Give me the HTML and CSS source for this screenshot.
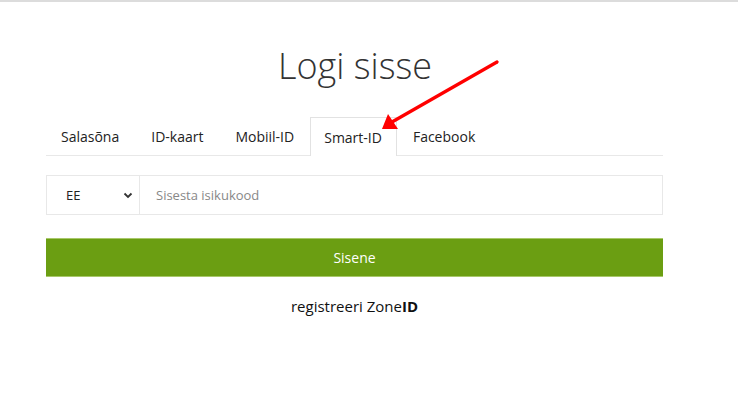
FILE: index.html
```html
<!DOCTYPE html>
<html lang="et">
<head>
<meta charset="utf-8">
<title>Logi sisse</title>
<link rel="stylesheet" href="styles.css">
</head>
<body>
<div class="topline"></div>
<main class="wrap">
  <h1 class="title">Logi sisse</h1>
  <nav class="tabs">
    <span class="tab">Salasõna</span>
    <span class="tab">ID-kaart</span>
    <span class="tab">Mobiil-ID</span>
    <span class="tab active">Smart-ID</span>
    <span class="tab">Facebook</span>
  </nav>
  <div class="field">
    <div class="country">
      <span>EE</span>
      <svg class="chev" width="10" height="7" viewBox="0 0 10 7"><path d="M1.5 1.5 L5 5 L8.5 1.5" fill="none" stroke="#333" stroke-width="1.8"/></svg>
    </div>
    <div class="code">Sisesta isikukood</div>
  </div>
  <button class="submit">Sisene</button>
  <p class="register">registreeri Zone<b>ID</b></p>
</main>
<svg class="arrow" width="738" height="402" viewBox="0 0 738 402">
  <line x1="497" y1="62" x2="392" y2="122" stroke="#f00" stroke-width="3.2" stroke-linecap="round"/>
  <polygon points="382,129 388,114 398,129" fill="#f00"/>
</svg>
</body>
</html>
```
FILE: styles.css
```css
html, body {
  margin: 0;
  padding: 0;
  background: #fff;
}
body {
  font-family: "Open Sans", "Liberation Sans", sans-serif;
  color: #222;
  width: 738px;
  height: 402px;
  overflow: hidden;
  position: relative;
}
.topline {
  height: 2px;
  background: #dcdcdc;
}
.wrap {
  width: 617px;
  margin-left: 46px;
  display: flex;
  flex-direction: column;
}
.title {
  margin: 39px 0 0;
  height: 50px;
  font-size: 36px;
  font-weight: 300;
  line-height: 50px;
  text-align: center;
  color: #333;
  padding-left: 1px;
}
.tabs {
  margin-top: 26px;
  display: flex;
  border-bottom: 1px solid #e8e8e8;
  height: 38px;
}
.tab {
  display: flex;
  align-items: center;
  padding: 0 15px;
  font-size: 14px;
  color: #222;
  border: 1px solid transparent;
  border-bottom: none;
}
.tab:first-child { padding-left: 14px; }
.tab.active {
  border-color: #e2e2e2;
  padding: 0 14px 0 13px;
  margin-bottom: -1px;
  background: #fff;
}
.field {
  margin-top: 19px;
  height: 38px;
  border: 1px solid #e8e8e8;
  display: flex;
}
.country {
  width: 93px;
  border-right: 1px solid #e8e8e8;
  display: flex;
  align-items: center;
  justify-content: space-between;
  padding: 0 6px 0 19px;
  box-sizing: border-box;
  font-size: 13px;
  color: #222;
}
.chev { display: block; }
.code {
  display: flex;
  align-items: center;
  padding-left: 16px;
  font-size: 13px;
  color: #888;
}
.submit {
  margin-top: 23px;
  height: 39px;
  border: none;
  border-top: 1px solid #a8c86a;
  border-bottom: 1px solid #a8c86a;
  background: #6b9e12;
  color: #fff;
  font-family: "Open Sans", "Liberation Sans", sans-serif;
  font-size: 14px;
  padding: 0;
}
.register {
  margin: 19px 0 0;
  text-align: center;
  font-size: 15px;
  color: #111;
}
.register b { font-weight: 700; }
.arrow {
  position: absolute;
  left: 0;
  top: 0;
  pointer-events: none;
}
```
